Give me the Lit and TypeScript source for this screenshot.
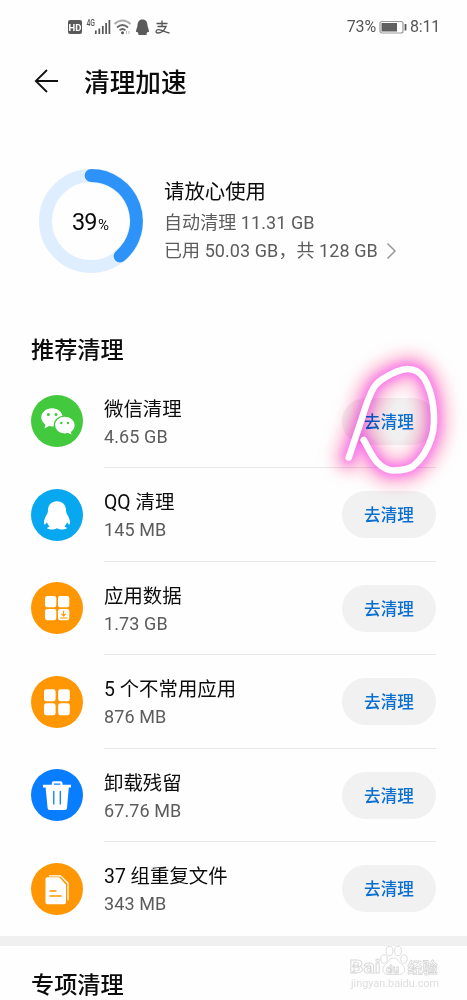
import { LitElement, html, svg, css } from "lit";
import { customElement, property } from "lit/decorators.js";

type Kind = "wechat" | "qq" | "data" | "apps" | "trash" | "files";

const glyphs = {
  wechat: svg`
    <path fill="#fff" d="M21 13.2c-6 0-10.7 4-10.7 9 0 3 1.600 5.500 4.100 7.200l-.9 4.200 4.600-2.500c1 .3 1.900.4 2.900.4 6 0 10.700-4 10.700-9.200s-4.700-9.100-10.700-9.100z"/>
    <path fill="#fff" stroke="#43c93e" stroke-width="1.300" d="M33.700 21.200c-5.800 0-10.300 3.900-10.300 8.900s4.500 9 10.300 9c1.100 0 2.200-.2 3.200-.5l4.600 2-1-3.400c2.400-1.700 3.800-4.200 3.800-7.100 0-5-4.800-8.900-10.600-8.900z"/>
    <g fill="#43c93e"><circle cx="17.400" cy="19.400" r="1.500"/><circle cx="25" cy="19.400" r="1.500"/><circle cx="30.300" cy="28" r="1.200"/><circle cx="37" cy="28" r="1.200"/></g>`,
  qq: svg`
    <path fill="#fff" d="M26 12.300c-5.800 0-9 4-9 9 0 1.300-.2 2.300-.8 3.500-1.900 3.300-3.400 6.500-3.200 9.200.1 1.900 1 1.800 2 .6l1-1.300c.5 1.800 1.300 3.100 2.600 4.200-1.600.5-2.500 1.300-2.300 2.100.3 1.100 7.400 1.200 9.700-.4 2.300 1.600 9.400 1.500 9.700.4.2-.8-.7-1.600-2.300-2.100 1.300-1.100 2.100-2.400 2.600-4.200l1 1.300c1 1.200 1.900 1.300 2-.6.2-2.700-1.300-5.900-3.200-9.200-.6-1.200-.8-2.200-.8-3.500 0-5-3.200-9-9-9z"/>`,
  data: svg`
    <g fill="#fff"><rect x="14" y="14" width="11.300" height="11.300" rx="2.200"/><rect x="27" y="14" width="11.300" height="11.300" rx="2.200"/><rect x="14" y="26.900" width="11.300" height="11.300" rx="2.200"/><rect x="27" y="26.900" width="11.300" height="11.300" rx="2.200"/></g>
    <path d="M32.600 28.700v5M30.300 31.800l2.300 2.200 2.300-2.200M29 36h7.300" stroke="#ff9705" stroke-width="1.100" fill="none"/>`,
  apps: svg`
    <g fill="#fff"><rect x="13" y="13.300" width="11.600" height="12" rx="2.400"/><rect x="27.200" y="13.300" width="11.600" height="12" rx="2.400"/><rect x="13" y="27.300" width="11.600" height="12" rx="2.400"/><rect x="27.200" y="27.300" width="11.600" height="12" rx="2.400"/></g>`,
  trash: svg`
    <path fill="#fff" d="M12 15.800h8.800v-1.600c0-1.200.8-2 2-2h6.700c1.200 0 2 .8 2 2v1.600H40v2.700h-2.200L36 39c-.1 1.200-.9 1.900-2 1.900H18.600c-1.100 0-1.900-.7-2-1.900l-2-20.500H12zM23 15.800h6.300v-1.300H23z"/>
    <path d="M22.800 22v13.500M29.300 22v13.500" stroke="#087dff" stroke-width="1.300"/>`,
  files: svg`
    <path fill="none" stroke="#fff" stroke-width="1.300" d="M18 12.800h11.700l7.300 7.500v17"/>
    <path fill="#fff" d="M16.500 14.300h11.800l6.700 7.500v17.400c0 1.200-.8 2-2 2H16.500c-1.200 0-2-.8-2-2V16.300c0-1.200.8-2 2-2z"/>
    <path d="M18.500 28h7M18.500 33h12.200" stroke="#ff9705" stroke-width="1.700"/>`,
};

const tints: Record<Kind, string> = {
  wechat: "#43c93e",
  qq: "#08a8f0",
  data: "#ff9705",
  apps: "#ff9705",
  trash: "#087dff",
  files: "#ff9705",
};

const loopPath =
  "M348.800 457.500L362 418Q368 398 373.500 388Q378 381 386 377C393 373 400 369 407.500 369C415 369 420 372 424 378C429 386 432 397 433.200 406C434.500 417 434.500 428 431.700 437C428 449 422 459 413.300 466C408 470 400 470.300 393.500 470.500C386 470.500 381.500 467 376.500 461.500C371 455 368 447 363.700 440";

const fonts = css`"Roboto", "Noto Sans CJK SC", sans-serif`;

@customElement("clean-row")
export class CleanRow extends LitElement {
  @property() kind: Kind = "wechat";
  @property() name = "";
  @property() size = "";

  static styles = css`
    :host { display: flex; height: 93.6px; padding: 0 31px; box-sizing: border-box; font-family: ${fonts}; }
    .icon { width: 52px; height: 52px; margin-top: 20.500px; flex: none; display: block; }
    .body { flex: 1; margin-left: 21px; display: flex; border-bottom: 1.500px solid #e8e8e8; box-sizing: border-box; }
    :host([last]) .body { border-bottom-color: transparent; }
    .text { flex: 1; padding-top: 20px; }
    .name { font-size: 19.400px; line-height: 29px; color: #0c0c0c; white-space: nowrap; }
    .size { font-size: 18px; line-height: 26px; color: #5c5c5c; letter-spacing: .1px; }
    .go { width: 94px; height: 47px; margin-top: 23px; border: 0; padding: 2px 0 0; border-radius: 24px; background: #f1f1f1; color: #0b6fcf; font: 500 16.600px/45px ${fonts}; }
  `;

  render() {
    return html`
      <svg class="icon" viewBox="0 0 52 52"><circle cx="26" cy="26" r="26" fill=${tints[this.kind]} />${glyphs[this.kind]}</svg>
      <div class="body">
        <div class="text"><div class="name">${this.name}</div><div class="size">${this.size}</div></div>
        <button class="go">去清理</button>
      </div>`;
  }
}

@customElement("app-root")
export class AppRoot extends LitElement {
  private items: { kind: Kind; name: string; size: string }[] = [
    { kind: "wechat", name: "微信清理", size: "4.65 GB" },
    { kind: "qq", name: "QQ 清理", size: "145 MB" },
    { kind: "data", name: "应用数据", size: "1.73 GB" },
    { kind: "apps", name: "5 个不常用应用", size: "876 MB" },
    { kind: "trash", name: "卸载残留", size: "67.76 MB" },
    { kind: "files", name: "37 组重复文件", size: "343 MB" },
  ];

  static styles = css`
    :host { display: block; position: relative; width: 467px; height: 1000px; overflow: hidden; background: #fefefe; font-family: ${fonts}; color: #0c0c0c; }
    .status { display: flex; justify-content: space-between; height: 54px; padding: 0 27px 0 66px; color: #555; font-size: 16px; line-height: 56px; }
    .signals { width: 108px; height: 54px; }
    .power { display: flex; align-items: center; gap: 3px; letter-spacing: -.2px; }
    .battery { width: 28px; height: 14px; }
    .head { display: flex; align-items: center; height: 54px; padding-left: 34px; gap: 25px; }
    .back { width: 25px; height: 26px; }
    .title { margin: 0; font-size: 25.700px; line-height: 54px; padding-top: 4px; font-weight: 500; }
    .summary { display: flex; height: 104px; margin: 60.500px 0 0 39px; gap: 21px; }
    .ring { width: 104px; height: 104px; }
    .info { padding-top: 7px; color: #5c5c5c; font-size: 18px; line-height: 28px; white-space: nowrap; letter-spacing: .07px; }
    .lead { color: #0c0c0c; font-size: 20.400px; line-height: 33px; letter-spacing: 0; }
    .used { display: flex; align-items: center; gap: 8px; }
    .chev { width: 11px; height: 18px; }
    .section { margin: 0; padding-left: 31px; font-size: 23.200px; line-height: 36px; font-weight: 500; }
    .first { margin-top: 59.500px; }
    .list { margin-top: 6.500px; }
    .band { height: 10px; background: #f0f0f0; }
    .second { margin-top: 21px; }
    .scribble { position: absolute; left: 317px; top: 330px; width: 150px; height: 180px; pointer-events: none; }
    .glow { mix-blend-mode: multiply; }
    .mark { position: absolute; left: 345px; top: 940px; width: 100px; height: 52px; }
  `;

  render() {
    return html`
      <div class="status">
        <svg class="signals" viewBox="66 0 108 54">
          <rect x="68" y="20" width="14" height="14" rx="2" fill="#5a5a5a" />
          <text x="75" y="30.700" text-anchor="middle" font-size="9.500" font-weight="700" fill="#fff">HD</text>
          <text x="86.500" y="26" font-size="8.500" font-weight="500" textLength="8.500" lengthAdjust="spacingAndGlyphs" fill="#555">4G</text>
          <path d="M95.800 34v-3.500M99.300 34v-5.500M102.800 34v-8M106.100 34v-11M109.400 34v-14" stroke="#555" stroke-width="1.700" />
          <g fill="none" stroke="#666" stroke-width="1.700"><path stroke="#aaa" d="M114.500 24q8-7 16 0" /><path d="M117 27.500q5.500-5 11 0" /><path d="M119.500 30.300q3-2.600 6 0" /></g>
          <circle cx="122.500" cy="32.700" r="1.500" fill="#555" />
          <path d="M126.500 31v3M129 31v3" stroke="#bbb" stroke-width="1" />
          <path fill="#5a5a5a" d="M142.500 19.500c-3.500 0-5 2.700-5 6 0 1.500-1.500 3.500-1.500 6.500h1.500c.2.800.7 1.200 1.200 1.500-1 .8-.5 1.400.5 1.400h6.600c1 0 1.500-.6.5-1.400.5-.3 1-.7 1.200-1.500h1.500c0-3-1.500-5-1.500-6.500 0-3.300-1.500-6-5-6z" />
          <path fill="none" stroke="#555" stroke-width="1.300" d="M156.500 23.500h11M162 20.500v6M157.500 26.500h8.500c-2 4.500-5 6.500-8 6.500-3 0-2.500-3.500 1-3.300 3 .2 6 2.500 10.500 3.300" />
        </svg>
        <div class="power">
          <span>73%</span>
          <svg class="battery" viewBox="0 0 28 14"><rect x="1" y="1.500" width="23" height="11.500" rx="2" fill="#fff" stroke="#999" stroke-width="1.200" /><rect x="2.500" y="3" width="15.500" height="8.500" fill="#606060" /><path d="M26.500 4v6.500" stroke="#555" stroke-width="1.800" /></svg>
          <span>8:11</span>
        </div>
      </div>
      <div class="head">
        <svg class="back" viewBox="0 0 25 26"><path d="M24 13H2M13 2 1.800 13 13 24" fill="none" stroke="#111" stroke-width="1.800" /></svg>
        <h1 class="title">清理加速</h1>
      </div>
      <div class="summary">
        <svg class="ring" viewBox="0 0 104 104">
          <circle cx="52" cy="52" r="45.500" fill="none" stroke="#dfeeff" stroke-width="13" />
          <path d="M52 6.500A45.500 45.500 0 0 1 81 87.060" fill="none" stroke="#e9f4ff" stroke-width="14.500" stroke-linecap="round" />
          <path d="M52 6.500A45.500 45.500 0 0 1 81 87.060" fill="none" stroke="#2e93f8" stroke-width="12.800" stroke-linecap="round" />
          <text x="33" y="61" font-size="23.500" fill="#0c0c0c" textLength="25.500">39</text><text x="59" y="61" font-size="14" fill="#0c0c0c" textLength="11" lengthAdjust="spacingAndGlyphs">%</text>
        </svg>
        <div class="info">
          <div class="lead">请放心使用</div>
          <div>自动清理 11.31 GB</div>
          <div class="used"><span>已用 50.03 GB，共 128 GB</span><svg class="chev" viewBox="0 0 11 18"><path d="M1.500 1.500 9 9l-7.500 7.500" fill="none" stroke="#999" stroke-width="1.500" /></svg></div>
        </div>
      </div>
      <h2 class="section first">推荐清理</h2>
      <div class="list">
        ${this.items.map((it, i) => html`<clean-row .kind=${it.kind} .name=${it.name} .size=${it.size} ?last=${i === this.items.length - 1}></clean-row>`)}
      </div>
      <div class="band"></div>
      <h2 class="section second">专项清理</h2>
      <svg class="scribble glow" viewBox="317 330 150 180">
        <defs>
          <filter id="wide" filterUnits="userSpaceOnUse" x="290" y="300" width="210" height="240"><feGaussianBlur stdDeviation="6.500" /></filter>
          <filter id="near" filterUnits="userSpaceOnUse" x="290" y="300" width="210" height="240"><feGaussianBlur stdDeviation="5" /></filter>
        </defs>
        <g fill="none" stroke-linecap="round" stroke-linejoin="round">
          <path d=${loopPath} stroke="#ff9cc0" stroke-opacity=".5" stroke-width="34" filter="url(#wide)" />
          <path d=${loopPath} stroke="#f860f0" stroke-opacity=".78" stroke-width="14" filter="url(#near)" />
        </g>
      </svg>
      <svg class="scribble" viewBox="317 330 150 180">
        <path d=${loopPath} fill="none" stroke="#fff" stroke-width="6.600" stroke-linecap="round" stroke-linejoin="round" />
      </svg>
      <svg class="mark" viewBox="345 940 100 52">
        <g fill="#fff" stroke="#d6d6d6" stroke-width=".8">
          <text x="349.500" y="973" font-size="18" font-weight="700" textLength="31" lengthAdjust="spacingAndGlyphs">Bai</text>
          <ellipse cx="384" cy="959" rx="3.200" ry="4.200" /><ellipse cx="389.500" cy="951" rx="3.400" ry="4.700" /><ellipse cx="398" cy="951" rx="3.400" ry="4.700" /><ellipse cx="404" cy="959" rx="3.200" ry="4.200" />
          <path d="M393.500 958c-4 0-5 4-8.500 7-4 4-2 9.500 3 9.500h11.500c5 0 7-5.500 3-9.500-3.500-3-5-7-9-7z" />
          <text x="386" y="972.500" font-size="11.500" font-weight="700">du</text>
          <text x="407.500" y="972.500" font-size="15" font-weight="700">经验</text>
        </g>
        <text x="351" y="987" font-size="10" textLength="88" lengthAdjust="spacingAndGlyphs" fill="#dedede">jingyan.baidu.com</text>
      </svg>`;
  }
}
